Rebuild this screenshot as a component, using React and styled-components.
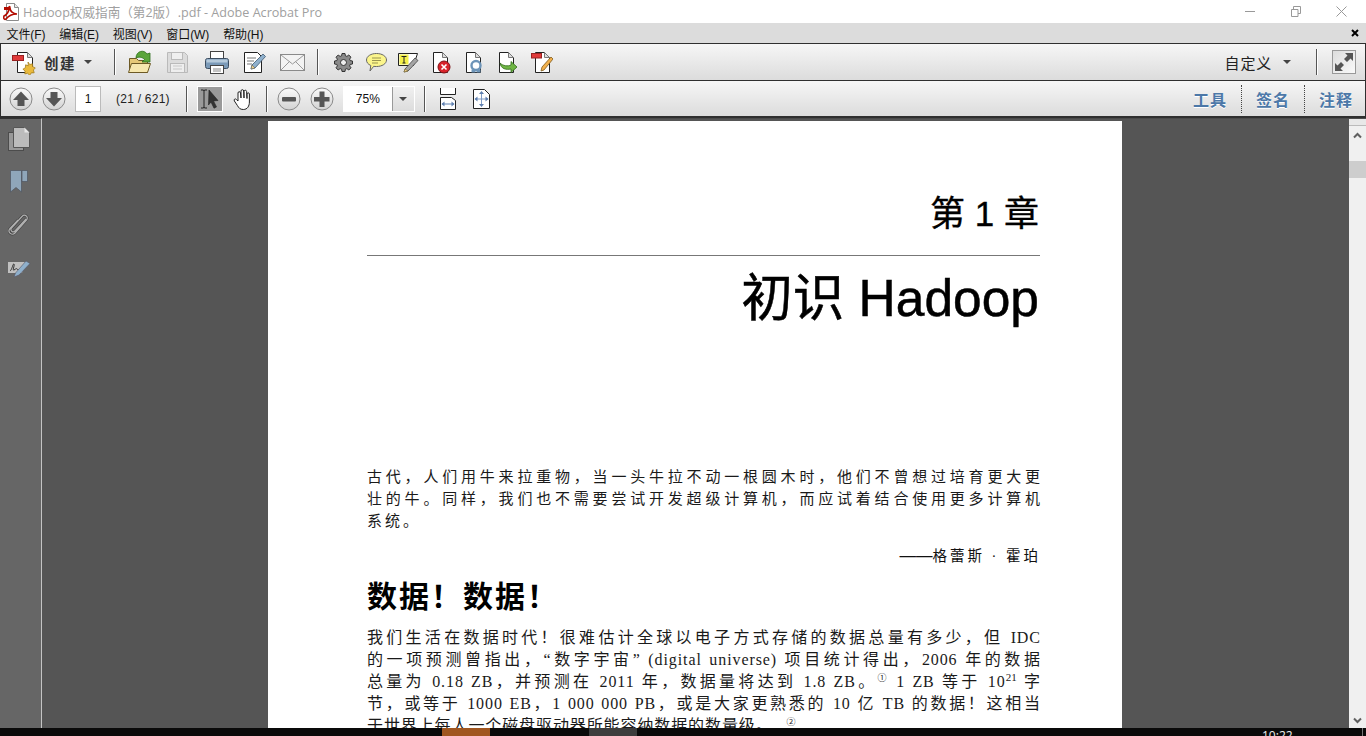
import React from "react";
import styled, { createGlobalStyle } from "styled-components";

const Global = createGlobalStyle`
  html, body { margin: 0; padding: 0; height: 100%; overflow: hidden; background: #555; }
  * { box-sizing: border-box; }
`;

const UI = `"Liberation Sans", "Noto Sans CJK SC", sans-serif`;

const Shell = styled.div`
  width: 1366px; height: 736px; display: flex; flex-direction: column; overflow: hidden;
  font-family: ${UI}; color: #111;
`;

/* ---------- title bar ---------- */
const TitleBar = styled.div`
  height: 23px; flex: none; background: #fff; display: flex; align-items: center; padding-left: 3px;
`;
const TitleText = styled.span`
  margin-left: 3px; font: 12.6px "Open Sans", "Noto Sans CJK SC", sans-serif; color: #a0a0a0; white-space: nowrap;
`;
const WinControls = styled.div`
  margin-left: auto; display: flex; align-items: center; gap: 35px; padding-right: 19px;
`;

/* ---------- menu bar ---------- */
const MenuBar = styled.div`
  height: 20px; flex: none; background: #dcdcdc; display: flex; align-items: center; padding: 0 7px 0 6.5px; gap: 14px;
`;
const MenuItem = styled.span`
  font-size: 12px; color: #111; white-space: nowrap; letter-spacing: -.1px;
`;
const MenuClose = styled.span`
  margin-left: auto; display: flex;
`;

/* ---------- tool bars ---------- */
const Bar = styled.div`
  height: ${p => p.$h}px; flex: none; display: flex; align-items: center;
  border: 1px solid #2f2f2f; border-top-width: ${p => p.$bt}px; border-bottom-width: ${p => p.$bb}px;
  background: linear-gradient(#f6f6f6, #dcdcdc);
  padding-left: ${p => p.$pl}px; padding-right: ${p => p.$pr}px;
`;
const Cell = styled.span`
  display: flex; flex: none; align-items: center; justify-content: center; margin-left: ${p => p.$ml || 0}px;
`;
const CreateLabel = styled.span`
  margin-left: 7px; font-size: 14.5px; font-weight: 700; color: #333; letter-spacing: 1.6px; white-space: nowrap;
`;
const Caret = styled.span`
  flex: none; margin-left: ${p => p.$ml || 0}px; width: 0; height: 0;
  border-left: 4px solid transparent; border-right: 4px solid transparent; border-top: 4px solid #444;
`;
const Sep = styled.span`
  flex: none; width: 1px; height: 26px; background: #555; box-shadow: 1px 0 0 #fff; margin-left: ${p => p.$ml}px;
`;
const Push = styled.span`margin-left: auto;`;
const Customize = styled.span`
  font-size: 15px; color: #222; letter-spacing: .8px; white-space: nowrap;
`;
const ExpandBtn = styled.span`
  flex: none; width: 24px; height: 24px; margin-left: ${p => p.$ml}px; border: 1px solid #999;
  background: linear-gradient(135deg, #dcdcdc, #fafafa); display: flex; align-items: center; justify-content: center;
`;
const PageBox = styled.span`
  flex: none; width: 26px; height: 26px; margin-left: ${p => p.$ml}px; background: #fff; border: 1px solid #bbb;
  box-shadow: inset 0 0 0 1px #fff; display: flex; align-items: center; justify-content: center; font-size: 12px; color: #111;
`;
const PageCount = styled.span`
  margin-left: ${p => p.$ml}px; font-size: 12px; color: #222; white-space: nowrap; letter-spacing: .25px;
`;
const ActiveTool = styled.span`
  flex: none; width: 26px; height: 26px; margin-left: ${p => p.$ml}px; background: #9a9a9a; border: 1px solid #fff;
  display: flex; align-items: center; justify-content: center;
`;
const Combo = styled.span`
  flex: none; width: 72px; height: 26px; margin-left: ${p => p.$ml}px; display: flex; border: 1px solid #fff; background: #fff;
`;
const ComboValue = styled.span`
  width: 48px; display: flex; align-items: center; justify-content: center; font-size: 12px; color: #111;
`;
const ComboBtn = styled.span`
  flex: 1; display: flex; align-items: center; justify-content: center; background: linear-gradient(#f0f0f0, #dcdcdc); border-left: 1px solid #999;
`;
const PaneTab = styled.span`
  font-size: 16px; font-weight: 700; color: #4c78a8; letter-spacing: 1px; white-space: nowrap; text-shadow: 0 1px 0 #fff;
`;
const DotSep = styled.span`
  flex: none; height: 28px; width: 0; border-left: 1px dotted #444; margin: 0 14px;
`;

/* ---------- work area ---------- */
const Work = styled.div`
  flex: 1; min-height: 0; display: flex; background: #555;
`;
const Rail = styled.div`
  width: 42px; flex: none; background: #666; border-right: 1px solid #c4c4c4; border-top: 1px solid #333;
  display: flex; flex-direction: column; align-items: center; padding: 8px 4px 0 0; gap: 19px;
`;
const RailItem = styled.span`
  display: flex; margin-top: ${p => p.$mt || 0}px;
`;
const Canvas = styled.div`
  flex: 1; min-width: 0; overflow: hidden; padding: 2px 0 0 226px; border-top: 1px solid #4a4a4a;
`;
const Page = styled.div`
  width: 854px; height: 700px; background: #fff; padding: 73px 82px 0 99px; color: #111;
`;
const Chapter = styled.div`
  font: 400 35px/40px "Liberation Sans", "Noto Sans CJK SC", sans-serif; text-align: right; padding-right: 1px; color: #000;
  -webkit-text-stroke: .35px #000;
`;
const Rule = styled.div`
  height: 1px; margin-top: 21px; background: #777;
`;
const BookTitle = styled.h1`
  margin: 12px 0 0; padding-right: 1px; font: 400 51.5px/60px "Liberation Sans", "Noto Sans CJK SC", sans-serif; text-align: right; color: #000;
  -webkit-text-stroke: .5px #000;
`;
const Stanza = styled.div`
  margin-top: ${p => p.$mt}px; margin-right: -${p => p.$ls}px; font: 400 ${p => p.$fs}px/22px "Liberation Serif", "Noto Sans CJK SC", serif; letter-spacing: ${p => p.$ls}px; color: #1a1a1a;
`;
const Line = styled.div`
  height: 22px; text-align: justify; text-align-last: ${p => p.$last ? "left" : "justify"};
`;
const Attribution = styled.div`
  margin-top: 12px; font: 400 14.5px/22px "Liberation Serif", "Noto Sans CJK SC", serif; letter-spacing: 3px; text-align: right; margin-right: -1px;
`;
const LongDash = styled.span`
  font: 400 16.5px/22px "Liberation Sans", sans-serif; letter-spacing: 0;
`;
const Heading = styled.h2`
  margin: 10px 0 0; font: 700 30px/40px "Liberation Sans", "Noto Sans CJK SC", sans-serif; letter-spacing: 2px; color: #000;
`;
const Sup = styled.sup`
  font-size: ${p => p.$fs}px; line-height: 0; vertical-align: 6px; margin-left: ${p => p.$ml || 0}px; letter-spacing: 0;
`;
const Scrollbar = styled.div`
  width: 17px; flex: none; background: #f0f0f0; display: flex; flex-direction: column; align-items: center;
  border-top: 1px solid #4a4a4a;
`;
const ScrollCap = styled.div`
  width: 100%; height: 7px; background: #e8e8e8; border-bottom: 1px solid #bbb;
`;
const ScrollUp = styled.div`display: flex; margin-top: 6px;`;
const Thumb = styled.div`
  width: 100%; height: 17px; margin-top: 22px; background: #cdcdcd;
`;
const ScrollDown = styled.div`display: flex; margin-top: auto; margin-bottom: 4px;`;

/* ---------- task strip ---------- */
const Taskbar = styled.div`
  height: 8px; flex: none; background: #0a0a0a; display: flex; overflow: hidden;
`;
const TaskTile = styled.span`
  flex: none; width: 48px; height: 8px; background: ${p => p.$c}; margin-left: ${p => p.$ml}px;
`;
const Clock = styled.span`
  flex: none; margin-left: ${p => p.$ml}px; padding-top: 1px; font: 12px/14px "Open Sans", sans-serif; color: #eee;
`;
const TrayLine = styled.span`
  flex: none; width: 1px; height: 8px; background: #777; margin-left: ${p => p.$ml}px;
`;

/* ---------- icons ---------- */
const PdfLogo = () => (
  <svg width="17" height="18" viewBox="0 0 17 18">
    <path d="M3.500.5h8l4 4v13h-12z" fill="#fff" stroke="#8b8b8b" />
    <path d="M11.500.5v4h4" fill="#e8e8e8" stroke="#8b8b8b" />
    <path d="M1 13c3-1 5-5 5-8 0-2 1-2 1 0 0 3 3 6 7 6-4 0-8 1-11 5-1 1-3 0-2-3z" fill="none" stroke="#b30b00" strokeWidth="1.6" />
    <path d="M1 4h6v3H1z" fill="#b30b00" />
  </svg>
);
const Minimize = () => <svg width="11" height="11"><path d="M0 5.500h10" stroke="#999" /></svg>;
const Restore = () => <svg width="10" height="11"><path d="M.5 3.500h6.500v7H.5zM2.500 3V.5h7v7H7" fill="none" stroke="#999" /></svg>;
const WinClose = () => <svg width="11" height="11"><path d="M.5.5l10 10M10.500.5l-10 10" stroke="#999" /></svg>;
const SmallX = () => <svg width="8" height="8"><path d="M1 1l6 6M7 1L1 7" stroke="#000" strokeWidth="2" /></svg>;

const Doc = ({ children }) => (
  <svg width="22" height="24" viewBox="0 0 22 24">
    <path d="M4.500 2.500h9l5 5v15h-14z" fill="#fff" stroke="#222" />
    <path d="M13.500 2.500v5h5z" fill="#ddd" stroke="#777" />
    {children}
  </svg>
);
const CreateIcon = () => (
  <svg width="25" height="25" viewBox="0 0 25 25">
    <path d="M5.500 2.500h10l5 5v15h-15z" fill="#fff" stroke="#222" />
    <path d="M15.500 2.500v5h5z" fill="#ddd" stroke="#777" />
    <rect x=".5" y="5.500" width="11" height="5" fill="#e03a3a" stroke="#922" />
    <path d="M16 12l1.700 2.500 2.800-.7.200 2.900 2.600 1.200-1.900 2.100.8 2.800-2.900.1-1.600 2.400-2.100-2-2.800.6.300-2.900-2.200-1.800 2.500-1.500.2-2.900 2.700 1z" fill="#e9b93c" stroke="#9a7414" strokeWidth=".7" />
  </svg>
);
const OpenIcon = () => (
  <svg width="25" height="25" viewBox="0 0 25 25">
    <path d="M2.500 8.500h7l2 2h9v12h-18z" fill="#e5c878" stroke="#6d5a26" />
    <path d="M1.500 22.500l3-9h19l-3 9z" fill="#f6e7ae" stroke="#6d5a26" />
    <path d="M9 8c0-7 8-9 11-4l3-1v9h-8l2.500-2.500c-2-2.500-6-3-8.500-1.500z" fill="#5aa53a" stroke="#2f6f1c" strokeWidth=".8" />
  </svg>
);
const SaveIcon = () => (
  <svg width="21" height="21" viewBox="0 0 21 21">
    <path d="M.5.500h17l3 3v17H.5z" fill="#dcdcdc" stroke="#bababa" />
    <rect x="4.500" y=".5" width="11" height="7" fill="#efefef" stroke="#bababa" />
    <rect x="3.500" y="11.500" width="14" height="9" fill="#eee" stroke="#bababa" />
    <path d="M6 14h9M6 17h9" stroke="#c8c8c8" />
  </svg>
);
const PrintIcon = () => (
  <svg width="24" height="23" viewBox="0 0 24 23">
    <rect x="5.500" y=".5" width="13" height="8" fill="#fff" stroke="#444" />
    <rect x=".5" y="7.500" width="23" height="10" rx="2" fill="#7b9ab8" stroke="#3b4d60" />
    <rect x="1.500" y="8.500" width="21" height="3" fill="#b6cadb" />
    <rect x="5.500" y="14.500" width="13" height="8" fill="#fff" stroke="#444" />
    <path d="M8 18h8M8 20h8" stroke="#888" />
  </svg>
);
const EditIcon = () => (
  <svg width="22" height="22" viewBox="0 0 22 22">
    <path d="M.5 1.500h13l4 4v16H.5z" fill="#fff" stroke="#222" />
    <path d="M3 7h9M3 10h7M3 13h5" stroke="#777" />
    <path d="M7 18l1-4L19 3l2.500 2.500L11 17z" fill="#8fb0cc" stroke="#3d5870" strokeWidth=".8" />
    <path d="M7 18l1-4 3 3z" fill="#f0d28a" stroke="#555" strokeWidth=".5" />
  </svg>
);
const MailIcon = () => (
  <svg width="25" height="17" viewBox="0 0 25 17">
    <rect x=".5" y=".5" width="24" height="16" fill="#f3f3f3" stroke="#8a8a8a" />
    <path d="M1 1l11.500 9L24 1M1 16l8.500-8.500M24 16l-8.500-8.500" fill="none" stroke="#9a9a9a" />
  </svg>
);
const GearIcon = () => (
  <svg width="19" height="19" viewBox="0 0 19 19">
    <path d="M8 .5h3l.4 2.300 1.500.6L14.800 2 17 4.200l-1.400 1.900.6 1.500 2.300.4v3l-2.300.4-.6 1.500 1.400 1.900-2.200 2.200-1.900-1.400-1.500.6-.4 2.300H8l-.4-2.300-1.500-.6L4.200 17 2 14.800l1.400-1.900-.6-1.500-2.300-.4v-3l2.300-.4.6-1.500L2 4.200 4.200 2l1.900 1.400 1.500-.6z" fill="#8a8a8a" stroke="#333" />
    <circle cx="9.500" cy="9.500" r="3" fill="#eee" stroke="#333" />
  </svg>
);
const CommentIcon = () => (
  <svg width="21" height="19" viewBox="0 0 21 19">
    <path d="M10.500.5c5.500 0 10 2.700 10 6.500s-4.500 6.500-10 6.500c-1 0-2 0-2.800-.2L4 18l.8-5.500C2 11.300.5 9.300.5 7 .5 3.200 5 .5 10.500.5z" fill="#fbf58c" stroke="#666" />
    <path d="M6 5h9M6 7.500h9M6 10h6" stroke="#9a9550" />
  </svg>
);
const NoteIcon = () => (
  <svg width="21" height="21" viewBox="0 0 21 21">
    <path d="M.5 1.500h19l-4 12H.5z" fill="#fff" stroke="#222" />
    <rect x="1.500" y="2.500" width="9" height="10" fill="#f4f04a" />
    <path d="M3.500 4.500h5M6 4.500v6.500M4.500 11h3" stroke="#222" />
    <path d="M6 20l1-3L17 6l3 2.500L10 19z" fill="#a5a5a5" stroke="#444" strokeWidth=".8" />
    <path d="M6 20l1-3 3 2z" fill="#f0d28a" stroke="#7a6a30" strokeWidth=".6" />
  </svg>
);
const DocX = () => (
  <Doc>
    <circle cx="15" cy="17" r="6" fill="#d8232a" stroke="#7e1216" />
    <path d="M12.500 14.500l5 5M17.500 14.500l-5 5" stroke="#fff" strokeWidth="1.600" />
  </Doc>
);
const DocSearch = () => (
  <Doc>
    <circle cx="14" cy="15.500" r="4.500" fill="#fff" stroke="#6d94b8" strokeWidth="2.400" />
    <path d="M9.500 22.500h4v-3h-4zM14.500 22.500h4v-3h-4z" fill="#6d94b8" />
  </Doc>
);
const DocSend = () => (
  <Doc>
    <path d="M5 13c1 6 6 7 11 6v3.500l6-5.500-6-5.500V15c-3 1.500-8 1-11-2z" fill="#6fb544" stroke="#2e6a18" strokeWidth=".8" />
  </Doc>
);
const DocForm = () => (
  <Doc>
    <rect x=".5" y="3.500" width="10" height="4.500" fill="#e03a3a" stroke="#922" />
    <path d="M10 21l1-4 9-10 2 2-9 11z" fill="#f2b04c" stroke="#7d5a1c" strokeWidth=".8" />
  </Doc>
);
const Expand = () => (
  <svg width="20" height="20" viewBox="0 0 20 20">
    <path d="M11 1h8v8l-2.500-2.500L13 10l-3-3 3.500-3.500z" fill="#555" />
    <path d="M1 19v-8l2.500 2.500L7 10l3 3-3.500 3.500L9 19z" fill="#555" />
  </svg>
);
const RoundBtn = ({ children }) => (
  <svg width="24" height="24" viewBox="0 0 24 24">
    <defs>
      <linearGradient id="rb" x1="0" y1="0" x2="0" y2="1">
        <stop offset="0" stopColor="#fafafa" /><stop offset="1" stopColor="#d2d2d2" />
      </linearGradient>
    </defs>
    <circle cx="12" cy="12" r="11" fill="url(#rb)" stroke="#8a8a8a" />
    {children}
  </svg>
);
const UpIcon = () => <RoundBtn><path d="M12 4.500L20 13h-4.500v6h-7v-6H4z" fill="#555" /></RoundBtn>;
const DownIcon = () => <RoundBtn><path d="M12 19.500L20 11h-4.500V5h-7v6H4z" fill="#555" /></RoundBtn>;
const MinusIcon = () => <RoundBtn><rect x="5" y="10" width="14" height="4.500" rx="1" fill="#555" /></RoundBtn>;
const PlusIcon = () => <RoundBtn><path d="M9.500 4.500h5V10h5v4.500h-5V20h-5v-5.500H4V10h5.500z" fill="#555" /></RoundBtn>;
const SelectIcon = () => (
  <svg width="22" height="22" viewBox="0 0 22 22">
    <path d="M2 2h2.500L5 3l.5-1H8M2 20h2.500l.5-1 .5 1H8M5 3v16" fill="none" stroke="#222" />
    <path d="M10 2l9 10.500-4.500.4 3 6-2.500 1.300-3-6.200L9.500 17z" fill="#333" stroke="#222" strokeWidth=".6" />
  </svg>
);
const HandIcon = () => (
  <svg width="21" height="22" viewBox="0 0 21 22">
    <path d="M5 13V5c0-1.800 2.300-1.800 2.500 0l.5 5V3c0-1.800 2.600-1.800 2.700 0l.3 7V3.500c.1-1.700 2.500-1.700 2.600 0l.4 7V6c.1-1.600 2.400-1.500 2.400 0v8c0 4-2 7.500-6 7.500-3.500 0-4.500-1.500-6-4l-3-4.500c-1-1.700 1-2.800 2-1.500z" fill="#fff" stroke="#222" />
  </svg>
);
const FitWidth = () => (
  <svg width="17" height="22" viewBox="0 0 17 22">
    <path d="M.5 0v6.500h15V0" fill="#fff" stroke="#222" />
    <path d="M.5 9.500h11l4 3v9H.5z" fill="#fff" stroke="#222" />
    <path d="M2 16h12" stroke="#5f80b0" /><path d="M1.500 16l3-2.500v5zM14.500 16l-3-2.500v5z" fill="#5f80b0" />
  </svg>
);
const FitPage = () => (
  <svg width="17" height="20" viewBox="0 0 17 20">
    <path d="M.5.500h11l5 5v14H.5z" fill="#fff" stroke="#222" />
    <path d="M2 10h13M8.500 3v14" stroke="#7f9bc4" />
    <path d="M1.500 10l3-2.500v5zM15.500 10l-3-2.500v5zM8.500 2L6 5h5zM8.500 18L6 15h5z" fill="#5f80b0" />
  </svg>
);
const PagesRail = () => (
  <svg width="22" height="24" viewBox="0 0 22 24">
    <rect x=".5" y="5.500" width="15" height="18" fill="#999" stroke="#4c4c4c" />
    <path d="M5.500.500h11l5 5v15h-16z" fill="#bcbcbc" stroke="#565656" />
    <path d="M16.500.500v5h5z" fill="#e6e6e6" />
  </svg>
);
const BookmarkRail = () => (
  <svg width="18" height="23" viewBox="0 0 18 23">
    <path d="M.5.500h11V22L6 17.500.5 22z" fill="#8fa6ba" stroke="#4d5560" strokeWidth=".7" />
    <path d="M12 .5h5.500v11H12z" fill="#8fa6ba" stroke="#4d5560" strokeWidth=".7" />
  </svg>
);
const ClipPath = "M18 6L7 18c-2 2.300-5.500-.7-3.500-3L14 3.500c3-3 7 .5 4.500 3.500L7 20c-3 3.500-8-1-5-4.500L10 7";
const ClipRail = () => (
  <svg width="21" height="24" viewBox="0 0 21 24">
    <path d={ClipPath} fill="none" stroke="#444" strokeWidth="2.600" />
    <path d={ClipPath} fill="none" stroke="#b0b0b0" strokeWidth="1.200" />
  </svg>
);
const SignRail = () => (
  <svg width="24" height="19" viewBox="0 0 24 19">
    <path d="M1 3h17l-3 11H1z" fill="#c0c0c0" />
    <path d="M3 12c2-1 3-8 4-7s-2 7 0 6 2-2 3-1 2 1 4 0" fill="none" stroke="#333" />
    <path d="M7 18l1.500-4L19 2l4 2.500L12 16z" fill="#8fb0cc" stroke="#556" strokeWidth=".6" />
  </svg>
);
const Chevron = ({ up }) => (
  <svg width="9" height="7" viewBox="0 0 9 7">
    <path d={up ? "M1 5.500L4.500 2 8 5.500" : "M1 1.500L4.500 5 8 1.500"} fill="none" stroke="#606060" strokeWidth="2" />
  </svg>
);

const menus = ["文件(F)", "编辑(E)", "视图(V)", "窗口(W)", "帮助(H)"];

export default function App() {
  return (
    <Shell>
      <Global />
      <TitleBar>
        <PdfLogo />
        <TitleText>Hadoop权威指南（第2版）.pdf - Adobe Acrobat Pro</TitleText>
        <WinControls><Minimize /><Restore /><WinClose /></WinControls>
      </TitleBar>
      <MenuBar>
        {menus.map(m => <MenuItem key={m}>{m}</MenuItem>)}
        <MenuClose><SmallX /></MenuClose>
      </MenuBar>
      <Bar $h={38} $bt={1} $bb={1} $pl={11} $pr={9}>
        <CreateIcon />
        <CreateLabel>创建</CreateLabel>
        <Caret $ml={8} />
        <Sep $ml={22} />
        <Cell $ml={12}><OpenIcon /></Cell>
        <Cell $ml={15}><SaveIcon /></Cell>
        <Cell $ml={17}><PrintIcon /></Cell>
        <Cell $ml={15}><EditIcon /></Cell>
        <Cell $ml={14}><MailIcon /></Cell>
        <Sep $ml={12} />
        <Cell $ml={16}><GearIcon /></Cell>
        <Cell $ml={13}><CommentIcon /></Cell>
        <Cell $ml={11}><NoteIcon /></Cell>
        <Cell $ml={10}><DocX /></Cell>
        <Cell $ml={11}><DocSearch /></Cell>
        <Cell $ml={11}><DocSend /></Cell>
        <Cell $ml={14}><DocForm /></Cell>
        <Push />
        <Customize>自定义</Customize>
        <Caret $ml={11} />
        <Sep $ml={25} />
        <ExpandBtn $ml={15}><Expand /></ExpandBtn>
      </Bar>
      <Bar $h={37} $bt={0} $bb={2} $pl={8} $pr={12}>
        <UpIcon />
        <Cell $ml={9}><DownIcon /></Cell>
        <PageBox $ml={9}>1</PageBox>
        <PageCount $ml={15}>(21 / 621)</PageCount>
        <Sep $ml={16} />
        <ActiveTool $ml={10}><SelectIcon /></ActiveTool>
        <Cell $ml={10}><HandIcon /></Cell>
        <Sep $ml={12} />
        <Cell $ml={10}><MinusIcon /></Cell>
        <Cell $ml={9}><PlusIcon /></Cell>
        <Combo $ml={9}>
          <ComboValue>75%</ComboValue>
          <ComboBtn><Caret /></ComboBtn>
        </Combo>
        <Sep $ml={9} />
        <Cell $ml={15}><FitWidth /></Cell>
        <Cell $ml={16}><FitPage /></Cell>
        <Push />
        <PaneTab>工具</PaneTab>
        <DotSep />
        <PaneTab>签名</PaneTab>
        <DotSep />
        <PaneTab>注释</PaneTab>
      </Bar>
      <Work>
        <Rail>
          <RailItem><PagesRail /></RailItem>
          <RailItem><BookmarkRail /></RailItem>
          <RailItem $mt={1}><ClipRail /></RailItem>
          <RailItem $mt={3}><SignRail /></RailItem>
        </Rail>
        <Canvas>
          <Page>
            <Chapter>第 1 章</Chapter>
            <Rule />
            <BookTitle>初识 Hadoop</BookTitle>
            <Stanza $mt={138} $fs={15} $ls={3}>
              <Line>古代，人们用牛来拉重物，当一头牛拉不动一根圆木时，他们不曾想过培育更大更</Line>
              <Line>壮的牛。同样，我们也不需要尝试开发超级计算机，而应试着结合使用更多计算机</Line>
              <Line $last>系统。</Line>
            </Stanza>
            <Attribution><LongDash>——</LongDash>格蕾斯 · 霍珀</Attribution>
            <Heading>数据！数据！</Heading>
            <Stanza $mt={10} $fs={16} $ls={0.9}>
              <Line>我们生活在数据时代！很难估计全球以电子方式存储的数据总量有多少，但 IDC</Line>
              <Line>的一项预测曾指出，“数字宇宙” (digital universe) 项目统计得出，2006 年的数据</Line>
              <Line>总量为 0.18 ZB，并预测在 2011 年，数据量将达到 1.8 ZB。<Sup $fs={9}>①</Sup> 1 ZB 等于 10<Sup $fs={11}>21</Sup> 字</Line>
              <Line>节，或等于 1000 EB，1 000 000 PB，或是大家更熟悉的 10 亿 TB 的数据！这相当</Line>
              <Line $last>于世界上每人一个磁盘驱动器所能容纳数据的数量级。<Sup $fs={9} $ml={14}>②</Sup></Line>
            </Stanza>
          </Page>
        </Canvas>
        <Scrollbar>
          <ScrollCap />
          <ScrollUp><Chevron up /></ScrollUp>
          <Thumb />
          <ScrollDown><Chevron /></ScrollDown>
        </Scrollbar>
      </Work>
      <Taskbar>
        <TaskTile $c="#a0561f" $ml={442} />
        <TaskTile $c="#3d3d3d" $ml={99} />
        <Clock $ml={625}>10:22</Clock>
        <TrayLine $ml={69} />
      </Taskbar>
    </Shell>
  );
}
